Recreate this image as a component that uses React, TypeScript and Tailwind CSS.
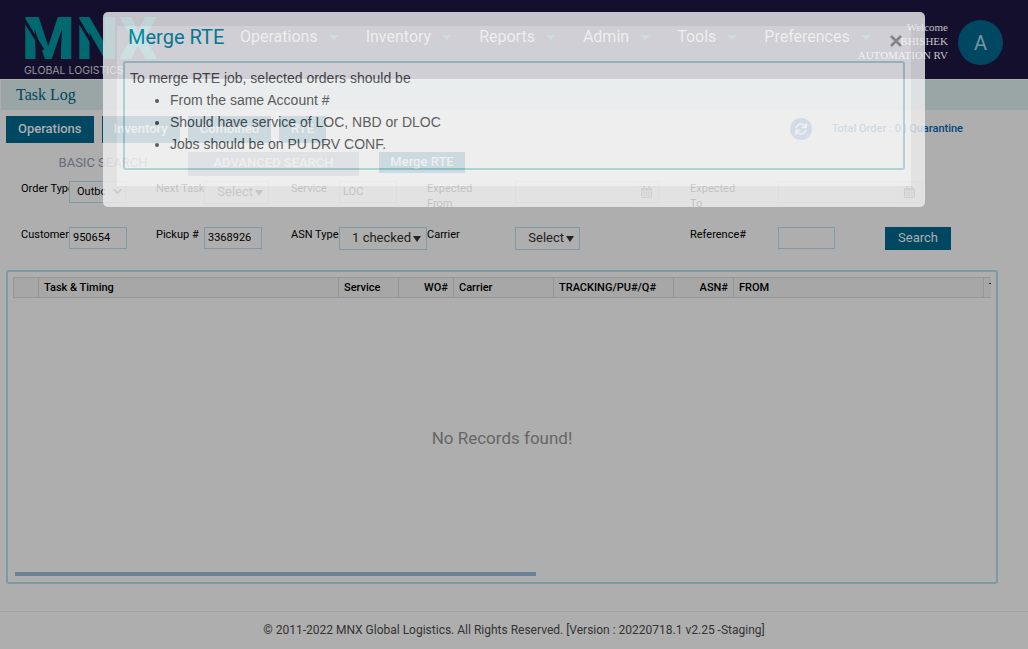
import { ChevronDown } from "lucide-react";
import { FaSync } from "react-icons/fa";
import { useState } from "react";

const menu = ["Operations", "Inventory", "Reports", "Admin", "Tools", "Preferences"];

function Logo() {
  return (
    <svg viewBox="0 0 140 64" className="h-16 w-[140px] shrink-0 overflow-visible" role="img" aria-label="MNX Global Logistics">
      <g fontFamily="Roboto" fontWeight="900" fontSize="60" fill="#00686f">
        <text x="-3" y="46">M</text>
        <text x="51" y="46">N</text>
        <text x="94" y="46">X</text>
      </g>
      <path d="M-2 5 L18 37 M52 5 L73 40" stroke="#150f2e" strokeWidth="3" />
      <text x="-1" y="61" fontFamily="Inter, sans-serif" fontSize="10.5" fill="#98979e">GLOBAL LOGISTICS</text>
    </svg>
  );
}

function Caret() {
  return (
    <svg viewBox="0 0 10 5" className="h-[5px] w-2.5" aria-hidden="true">
      <path d="M0 0H10L5 5Z" fill="#00506c" />
    </svg>
  );
}

function Triangle() {
  return (
    <svg viewBox="0 0 8 6" className="h-1.5 w-2" aria-hidden="true">
      <path d="M0 0H8L4 6Z" fill="#222" />
    </svg>
  );
}

function CalendarIcon() {
  return (
    <svg viewBox="0 0 11 12" className="h-3 w-[11px]" aria-hidden="true">
      <path d="M0.5 2.5H10.5V11.5H0.5Z" fill="none" stroke="#555" />
      <path d="M0 2H11V4.5H0Z M2 0H4V3H2Z M7 0H9V3H7Z" fill="#555" />
      <path d="M3.2 4V12M5.5 4V12M7.8 4V12M0 6.8H11M0 9.2H11" stroke="#555" strokeWidth="0.7" />
    </svg>
  );
}

function TextField({ id, label, value = "", className = "" }: { id: string; label: string; value?: string; className?: string }) {
  return (
    <div className={`flex items-start ${className}`}>
      <label htmlFor={id} className="w-12 shrink-0 whitespace-nowrap">{label}</label>
      <input id={id} defaultValue={value} className="h-[22px] w-[58px] border border-[#7d9ba2] bg-transparent px-[3px] pb-0.5 text-[11px]" />
    </div>
  );
}

function Picker({ id, label, text, width }: { id: string; label: string; text: string; width: string }) {
  return (
    <>
      <label htmlFor={id} className="w-12 shrink-0 whitespace-nowrap">{label}</label>
      <button id={id} className={`flex h-[23px] items-center justify-end gap-0.5 border border-[#7d9ba2] pr-[5px] text-[13px] text-[#222] ${width}`}>
        <span className="pb-0.5">{text}</span>
        <Triangle />
      </button>
    </>
  );
}

function DateField({ id, label }: { id: string; label: string }) {
  return (
    <div className="flex items-start">
      <label htmlFor={id} className="w-[88px] shrink-0 pr-8">{label}</label>
      <div className="flex h-[22px] w-[145px] border border-[#7d9ba2]">
        <input id={id} className="min-w-0 flex-1 bg-transparent px-1" />
        <button aria-label={`Choose ${label}`} className="flex w-[26px] items-center justify-center bg-[#a8a8a8]">
          <CalendarIcon />
        </button>
      </div>
    </div>
  );
}

function MergeDialog({ onClose }: { onClose: () => void }) {
  return (
    <div className="absolute inset-x-[103px] top-3 rounded-[5px] bg-[#f0f0f0] px-3.5 pt-3.5 pb-[21px] opacity-80" role="dialog" aria-labelledby="merge-title">
      <div className="bg-white px-1.5 pb-4">
        <div className="flex h-[35px] items-start justify-between pl-[5px]">
          <h2 id="merge-title" className="text-xl leading-[23px] text-[#0094ae]">Merge RTE</h2>
          <button onClick={onClose} aria-label="Close" className="pt-[9px] pr-[3px]">
            <svg viewBox="0 0 12 12" className="size-3" aria-hidden="true">
              <path d="M1 1L11 11M11 1L1 11" stroke="#a0a0a0" strokeWidth="2.6" />
            </svg>
          </button>
        </div>
        <div className="h-[109px] rounded-[3px] border-2 border-[#b1dadf] px-[5px] pt-1 font-['Liberation_Sans',Arial,sans-serif] text-[14px] leading-[22px] text-[#4a4a4a]">
          <p>To merge RTE job, selected orders should be</p>
          <ul className="list-disc pl-10">
            <li>From the same Account #</li>
            <li>Should have service of LOC, NBD or DLOC</li>
            <li>Jobs should be on PU DRV CONF.</li>
          </ul>
        </div>
      </div>
    </div>
  );
}

export default function App() {
  const [open, setOpen] = useState(true);
  return (
    <div className="relative flex min-h-screen flex-col bg-[#aeaeae] font-['Roboto',sans-serif] text-[11px] leading-[15px] text-black">
      <header className="flex h-[79px] items-start bg-[#150f2e] pl-[25px] pt-[13px]">
        <Logo />
        <nav className="ml-[75px] flex gap-[27px] pt-3 text-base leading-6 text-[#aeaeae]">
          {menu.map((m) => (
            <a key={m} href="#" className="flex items-center gap-[11px]">{m}<Caret /></a>
          ))}
        </nav>
        <div className="ml-auto flex items-start pr-[25px]">
          <p className="-ml-8 mr-2.5 pt-[7px] text-right font-['Liberation_Serif',serif] text-[11px] leading-[14px] text-[#c4c4c4]">Welcome<br />BHISHEK<br />AUTOMATION RV</p>
          <div className="mt-[7px] flex size-[45px] items-center justify-center rounded-full bg-[#004862] text-xl text-[#7795a3]">A</div>
        </div>
      </header>
      <h1 className="mt-px ml-px h-[30px] bg-[#99a6a5] pl-[15px] font-['Liberation_Serif',serif] text-base leading-[30px] text-[#00455c]">Task Log</h1>

      <div className="flex h-[33px] items-end gap-2 pl-1.5 text-[13px] font-medium text-[#aeaeae]">
        {["Operations", "Inventory", "Combined", "RTE"].map((t) => (
          <button key={t} className="h-[27px] bg-[#004862] px-3 pb-0.5">{t}</button>
        ))}
        <div className="ml-auto flex h-[27px] items-center gap-5 pr-[65px] pb-0.5 text-[11px] font-medium text-[#00457c]">
          <button aria-label="Refresh" className="flex size-[22px] items-center justify-center rounded-full bg-[#234f83] text-[#aeaeae]"><FaSync size={12} /></button>
          <span>Total Order : 0 | <a href="#">Quarantine</a></span>
        </div>
      </div>

      <div className="mt-[9px] flex h-6 items-start gap-5 pl-[18px] text-[13px] font-medium">
        <div className="flex h-6">
          <button className="w-[170px] pb-[3px] font-normal text-[#626c7b]">BASIC SEARCH</button>
          <button className="w-[171px] bg-[#626c7b] pb-[3px] text-[#aeaeae]">ADVANCED SEARCH</button>
        </div>
        <button className="h-[21px] w-[86px] bg-[#004862] pb-0.5 text-[#aeaeae]">Merge RTE</button>
      </div>

      <form className="mt-[5px] grid grid-cols-[135px_135px_136px_263px_195px_1fr] gap-y-6 pl-[21px]" onSubmit={(e) => e.preventDefault()}>
        <div className="flex h-[22px]">
          <label htmlFor="order" className="w-12 shrink-0 overflow-hidden whitespace-nowrap">Order Type</label>
          <div className="relative">
            <select id="order" className="h-[22px] w-[57px] appearance-none border border-[#7d9ba2] bg-transparent pr-5 pb-0.5 pl-[7px] text-[11px]"><option>Outbound</option></select>
            <ChevronDown size={13} strokeWidth={3} className="pointer-events-none absolute top-1 right-0.5 text-[#333]" />
          </div>
        </div>
        <div className="flex h-[22px]"><Picker id="task" label="Next Task" text="Select" width="w-[65px]" /></div>
        <TextField id="service" label="Service" value="LOC" className="h-[22px]" />
        <div className="h-[22px]"><DateField id="from" label="Expected From" /></div>
        <div className="h-[22px]"><DateField id="to" label="Expected To" /></div>
        <div />
        <TextField id="customer" label="Customer" value="950654" />
        <TextField id="pickup" label="Pickup #" value="3368926" />
        <div className="flex"><Picker id="asn" label="ASN Type" text="1 checked" width="w-[88px]" /></div>
        <div className="flex">
          <label htmlFor="carrier" className="w-[88px]">Carrier</label>
          <button id="carrier" className="flex h-[23px] w-[65px] items-center justify-end gap-0.5 border border-[#7d9ba2] pr-[5px] text-[13px] text-[#222]">
            <span className="pb-0.5">Select</span>
            <Triangle />
          </button>
        </div>
        <div className="flex"><label htmlFor="ref" className="w-[88px]">Reference#</label><input id="ref" className="h-[22px] w-[57px] border border-[#7d9ba2] bg-transparent px-1" /></div>
        <button className="h-[23px] w-[66px] bg-[#004862] pb-0.5 text-[13px] text-[#aeaeae]">Search</button>
      </form>

      <main className="mt-5 mr-[30px] ml-1.5 flex h-[314px] flex-col rounded-[3px] border-2 border-[#7d9ba2] px-[5px] pt-[5px] pb-1.5">
        <div className="overflow-hidden">
          <table className="w-[1040px] table-fixed border-collapse text-[11px]">
            <thead>
              <tr className="h-5 bg-[#a7a7a7] text-left *:border *:border-[#979797] *:px-[5px] *:font-medium">
                <th className="w-[25px]" aria-label="Select row" /><th className="w-[300px]">Task &amp; Timing</th><th className="w-[60px]">Service</th><th className="w-[55px] text-right">WO#</th><th className="w-[100px]">Carrier</th><th className="w-[120px]">TRACKING/PU#/Q#</th><th className="w-[60px] text-right">ASN#</th><th className="w-[250px]">FROM</th><th>TO</th>
              </tr>
            </thead>
          </table>
        </div>
        <p className="flex flex-1 items-center justify-center pt-1.5 text-[17px] text-[#666]">No Records found!</p>
        <div className="ml-0.5 h-1 w-[521px] bg-[#688399]" />
      </main>
      <footer className="mt-[27px] flex-1 border-t border-[#a3a3a3] pt-2.5 text-center text-xs text-[#333]">© 2011-2022 MNX Global Logistics. All Rights Reserved. [Version : 20220718.1 v2.25 -Staging]</footer>
      {open && <MergeDialog onClose={() => setOpen(false)} />}
    </div>
  );
}
